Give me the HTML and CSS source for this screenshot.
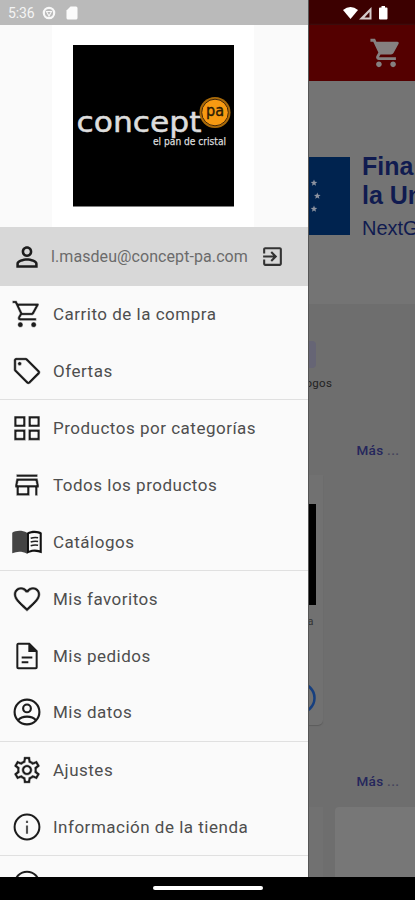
FILE: index.html
```html
<!DOCTYPE html>
<html lang="es">
<head>
<meta charset="utf-8">
<title>Concept PA</title>
<link rel="stylesheet" href="styles.css">
</head>
<body>
<div class="screen">
  <div class="content">
    <aside class="drawer">
      <div class="status">
        <span class="clock">5:36</span>
        <svg class="st-ring" viewBox="0 0 14 14"><circle cx="7" cy="7" r="5.2" fill="none" stroke="#fff" stroke-width="2.2"/><path d="M4.500 5.500h5L7 10z" fill="none" stroke="#fff" stroke-width="1.100"/></svg>
        <svg class="st-card" viewBox="0 0 12 14"><path d="M4.500.5H10a1.500 1.500 0 0 1 1.500 1.500v10a1.500 1.500 0 0 1-1.500 1.500H2A1.500 1.500 0 0 1 .5 12V4.500z" fill="#fff"/></svg>
      </div>
      <div class="brand">
        <svg class="logo" viewBox="0 0 202 202">
          <rect width="202" height="202" fill="#fff"/>
          <rect x="21" y="20" width="161" height="161.500" fill="#000"/>
          <text class="word" x="24.500" y="107" textLength="125" lengthAdjust="spacingAndGlyphs">concept</text>
          <circle cx="163" cy="87.500" r="15.500" fill="#a96a09"/>
          <circle cx="163" cy="87.500" r="13.300" fill="#f79a12" stroke="#42270a" stroke-width="1"/>
          <text class="pa" x="154" y="91" textLength="18" lengthAdjust="spacingAndGlyphs">pa</text>
          <text class="tag" x="101" y="119.500" textLength="73" lengthAdjust="spacingAndGlyphs">el pan de cristal</text>
        </svg>
      </div>
      <div class="account">
        <svg class="icon" viewBox="0 0 24 24"><path d="M12 5.900c1.160 0 2.100.94 2.100 2.100s-.94 2.100-2.100 2.100S9.900 9.160 9.900 8s.94-2.100 2.100-2.100m0 9c2.970 0 6.100 1.460 6.100 2.100v1.100H5.900V17c0-.64 3.130-2.100 6.100-2.100M12 4C9.790 4 8 5.790 8 8s1.790 4 4 4 4-1.790 4-4-1.790-4-4-4zm0 9c-2.670 0-8 1.340-8 4v3h16v-3c0-2.660-5.330-4-8-4z"/></svg>
        <span class="mail">l.masdeu@concept-pa.com</span>
        <svg class="exit" viewBox="0 0 24 24"><path d="M10.090 15.590L11.500 17l5-5-5-5-1.410 1.410L12.670 11H3v2h9.670l-2.580 2.590zM19 3H5c-1.110 0-2 .9-2 2v4h2V5h14v14H5v-4H3v4c0 1.100.89 2 2 2h14c1.100 0 2-.9 2-2V5c0-1.100-.9-2-2-2z"/></svg>
      </div>
      <nav class="menu">
        <ul class="group">
          <li class="item"><svg class="icon thin" viewBox="0 0 24 24"><path d="M15.550 13c.75 0 1.410-.41 1.750-1.030l3.580-6.490c.37-.66-.11-1.480-.87-1.480H5.210l-.94-2H1v2h2l3.600 7.590-1.350 2.440C4.520 15.370 5.480 17 7 17h12v-2H7l1.100-2h7.450zM6.160 6h12.150l-2.760 5H8.530L6.160 6zM7 18c-1.100 0-1.990.9-1.990 2S5.900 22 7 22s2-.9 2-2-.9-2-2-2zm10 0c-1.100 0-1.990.9-1.990 2s.89 2 1.990 2 2-.9 2-2-.9-2-2-2z"/></svg><span>Carrito de la compra</span></li>
          <li class="item"><svg class="icon thin" viewBox="0 0 24 24"><path d="M21.410 11.580l-9-9C12.050 2.220 11.550 2 11 2H4c-1.100 0-2 .9-2 2v7c0 .55.22 1.050.59 1.420l9 9c.36.36.86.58 1.410.58s1.050-.22 1.410-.59l7-7c.37-.36.59-.86.59-1.410s-.23-1.060-.59-1.420zM13 20.010L4 11V4h7v-.01l9 9-7 7.020z"/><circle cx="6.500" cy="6.500" r="1.500"/></svg><span>Ofertas</span></li>
        </ul>
        <ul class="group">
          <li class="item"><svg class="icon thin" viewBox="0 0 24 24"><path fill-rule="evenodd" d="M2.300 3H11v8.300H2.300zm2 2v4.300H9V5zM13 3h8.700v8.300H13zm2 2v4.300h4.700V5zM2.300 13H11v8.300H2.300zm2 2v4.300H9V15zM13 13h8.700v8.300H13zm2 2v4.300h4.700V15z"/></svg><span>Productos por categorías</span></li>
          <li class="item"><svg class="icon thin" viewBox="0 0 24 24"><path d="M18.360 9l.6 3H5.040l.6-3h12.720M20 4H4v2h16V4zm0 3H4l-1 5v2h1v6h10v-6h4v6h2v-6h1v-2l-1-5zM6 18v-4h6v4H6z"/></svg><span>Todos los productos</span></li>
          <li class="item"><svg class="icon" viewBox="0 0 26 24"><path fill="#444" d="M1 4.500C4 2.500 9 2.300 13 4.500v17c-4-2.100-8-2-12-.4z"/><path fill="#111" fill-rule="evenodd" d="M13 4.500c4-2.200 9-2 12 0v16.600c-4-1.600-8-1.700-12 .4zm1.600 1v13.600c2.800-1.200 6-1.200 8.700-.3V5.500c-2.700-1.200-6-1.200-8.700 0z"/><path fill="none" stroke="#222" stroke-width="1.200" d="M16 9q3-1 6-.4M16 12q3-1 6-.4M16 15q3-1 6-.4"/></svg><span>Catálogos</span></li>
        </ul>
        <ul class="group">
          <li class="item"><svg class="icon thin" viewBox="0 0 24 24"><path d="M16.500 3c-1.740 0-3.410.81-4.500 2.090C10.910 3.810 9.240 3 7.500 3 4.420 3 2 5.420 2 8.500c0 3.780 3.400 6.860 8.550 11.540L12 21.350l1.450-1.320C18.600 15.360 22 12.280 22 8.500 22 5.420 19.580 3 16.500 3zm-4.400 15.550l-.1.100-.1-.1C7.140 14.240 4 11.390 4 8.500 4 6.500 5.500 5 7.500 5c1.540 0 3.040.99 3.570 2.360h1.870C13.460 5.990 14.960 5 16.500 5c2 0 3.500 1.500 3.500 3.500 0 2.890-3.140 5.740-7.900 10.050z"/></svg><span>Mis favoritos</span></li>
          <li class="item"><svg class="icon" viewBox="0 0 24 24"><path d="M8 17.500h5v-1.500H8zM8 13.900h8v-1.500H8z"/><path fill-rule="evenodd" d="M14 2H5.500c-1 0-1.500.9-1.500 1.700v16.600c0 1 .6 1.700 1.500 1.700h13c1 0 1.500-.7 1.500-1.700V8l-6-6zM5.500 20.500v-17H13V9h5.500v11.500z"/></svg><span>Mis pedidos</span></li>
          <li class="item"><svg class="icon" viewBox="0 0 24 24"><g fill="none" stroke="#1c1c1c" stroke-width="1.600"><circle cx="12" cy="12" r="9.300"/><circle cx="12" cy="9.300" r="2.900"/><path d="M5.300 18.200c3-3.600 10.400-3.600 13.400 0"/></g></svg><span>Mis datos</span></li>
        </ul>
        <ul class="group">
          <li class="item"><svg class="icon thin" viewBox="0 0 24 24"><path d="M19.430 12.980c.04-.32.07-.64.07-.98 0-.34-.03-.66-.07-.98l2.110-1.650c.19-.15.24-.42.12-.64l-2-3.460c-.09-.16-.26-.25-.44-.25-.06 0-.12.01-.17.03l-2.490 1c-.52-.4-1.080-.73-1.690-.98l-.38-2.650C14.460 2.180 14.250 2 14 2h-4c-.25 0-.46.18-.49.42l-.38 2.650c-.61.25-1.170.59-1.690.98l-2.490-1c-.06-.02-.12-.03-.18-.03-.17 0-.34.09-.43.25l-2 3.460c-.13.22-.07.49.12.64l2.110 1.650c-.04.32-.07.65-.07.98 0 .33.03.66.07.98l-2.110 1.650c-.19.15-.24.42-.12.64l2 3.460c.09.16.26.25.44.25.06 0 .12-.01.17-.03l2.490-1c.52.4 1.080.73 1.690.98l.38 2.650c.03.24.24.42.49.42h4c.25 0 .46-.18.49-.42l.38-2.650c.61-.25 1.170-.59 1.690-.98l2.490 1c.06.02.12.03.18.03.17 0 .34-.09.43-.25l2-3.460c.12-.22.07-.49-.12-.64l-2.110-1.650zm-1.980-1.710c.04.31.05.52.05.73 0 .21-.02.43-.05.73l-.14 1.130.89.7 1.080.84-.7 1.210-1.270-.51-1.040-.42-.9.680c-.43.32-.84.56-1.250.73l-1.060.43-.16 1.130-.2 1.350h-1.400l-.19-1.350-.16-1.130-1.060-.43c-.43-.18-.83-.41-1.230-.71l-.91-.7-1.060.43-1.270.51-.7-1.210 1.080-.84.89-.7-.14-1.130c-.03-.31-.05-.54-.05-.74s.02-.43.05-.73l.14-1.130-.89-.7-1.080-.84.7-1.210 1.270.51 1.040.42.9-.68c.43-.32.84-.56 1.250-.73l1.060-.43.16-1.130.2-1.350h1.390l.19 1.350.16 1.130 1.060.43c.43.18.83.41 1.230.71l.91.7 1.060-.43 1.270-.51.7 1.210-1.070.85-.89.7.14 1.130zM12 8c-2.210 0-4 1.790-4 4s1.790 4 4 4 4-1.790 4-4-1.790-4-4-4zm0 6c-1.100 0-2-.9-2-2s.9-2 2-2 2 .9 2 2-.9 2-2 2z"/></svg><span>Ajustes</span></li>
          <li class="item"><svg class="icon" viewBox="0 0 24 24"><circle cx="12" cy="12" r="9.300" fill="none" stroke="#1c1c1c" stroke-width="1.500"/><path fill="#555" d="M11.200 10.800h1.600V17h-1.600zM11.200 7.400h1.600V9h-1.600z"/></svg><span>Información de la tienda</span></li>
        </ul>
        <ul class="group">
          <li class="item"><svg class="icon" viewBox="0 0 24 24"><circle cx="12" cy="12" r="9.200" fill="none" stroke="#1c1c1c" stroke-width="1.500"/></svg></li>
        </ul>
      </nav>
    </aside>
    <main class="page">
      <div class="page-status">
        <svg viewBox="0 0 46 15" width="46" height="15"><path d="M0 4Q7.500-2 15 4L7.500 13z" fill="#fff"/><path d="M28.500 1v12.500H16z" fill="#d5caca"/><path d="M26.500 6v5.500h-5z" fill="#3c0000"/><path d="M37 1.500h1.500V0h3.500v1.500h1.500a1 1 0 0 1 1 1V12.500a1 1 0 0 1-1 1H37a1 1 0 0 1-1-1V2.500a1 1 0 0 1 1-1z" fill="#fff"/></svg>
      </div>
      <div class="appbar">
        <svg viewBox="0 0 24 24" width="34" height="34"><path fill="#858080" d="M7 18c-1.100 0-1.990.9-1.990 2S5.900 22 7 22s2-.9 2-2-.9-2-2-2zM1 2v2h2l3.600 7.590-1.350 2.450c-.16.28-.25.61-.25.96 0 1.100.9 2 2 2h12v-2H7.420c-.14 0-.25-.11-.25-.25l.03-.12.900-1.630h7.450c.75 0 1.410-.41 1.750-1.030l3.580-6.490A1.003 1.003 0 0 0 20 4H5.210l-.94-2H1zm16 16c-1.100 0-1.990.9-1.990 2s.89 2 1.990 2 2-.9 2-2-.9-2-2-2z"/></svg>
      </div>
      <section class="banner">
        <svg class="flag" viewBox="1 0 41 78"><rect width="42" height="78" fill="#00234f"/><g fill="#8d93a0"><path id="s" d="M6 22.500l.9 2.300 2.400.1-1.900 1.500.7 2.400L6 27.400l-2.100 1.400.7-2.400-1.900-1.500 2.400-.1z"/><use href="#s" x="3.300" y="13"/><use href="#s" y="26"/></g></svg>
        <div class="fund"><b>Finan</b><b>la Un</b><span>NextG</span></div>
      </section>
      <section class="cats"><div class="chip"></div><div class="chip-label">ogos</div></section>
      <div class="more">Más <i>...</i></div>
      <section class="product">
        <div class="photo"></div>
        <div class="pname">a</div>
        <svg class="ring" viewBox="1 0 7 34"><circle cx="-8" cy="17" r="14.500" fill="none" stroke="#163f7f" stroke-width="2.500"/></svg>
      </section>
      <div class="more second">Más <i>...</i></div>
      <section class="cards"><div class="card edge"></div><div class="card"></div></section>
    </main>
  </div>
  <footer class="navbar"><div class="handle"></div></footer>
</div>
</body>
</html>
```
FILE: styles.css
```css
* { box-sizing: border-box; }
body { margin: 0; font-family: Roboto, "Liberation Sans", sans-serif; }
ul { margin: 0; padding: 0; list-style: none; }
svg { display: block; flex: none; }
.screen { width: 415px; height: 900px; overflow: hidden; display: flex; flex-direction: column; background: #000; }
.content { height: 877px; display: flex; overflow: hidden; flex: none; }
.drawer { width: 307.500px; height: 877px; flex: none; background: #fafafa; overflow: hidden; }
.status { height: 25px; background: #bababa; display: flex; align-items: center; padding-left: 8px; color: #f4f4f4; }
.clock { font-size: 14px; width: 34px; line-height: 25px; padding-top: 2px; letter-spacing: -.1px; }
.st-ring { width: 14px; height: 14px; opacity: .9; }
.st-card { width: 12px; height: 14px; margin-left: 10px; opacity: .95; }
.brand { height: 202px; padding-left: 52px; }
.logo { width: 202px; height: 202px; }
.word { font: 28px "DejaVu Sans", sans-serif; fill: #ddd; stroke: #ddd; stroke-width: .5px; }
.pa { font: 16px "DejaVu Sans", sans-serif; fill: #2a1a05; stroke: #2a1a05; stroke-width: .4px; }
.tag { font: 10.5px "DejaVu Sans", sans-serif; fill: #ddd; stroke: #ddd; stroke-width: .25px; }
.account { height: 59px; background: #d8d8d8; display: flex; align-items: center; padding-left: 11px; color: #6b6b6b; }
.icon { width: 32px; height: 32px; fill: #1c1c1c; }
.thin { stroke: #fafafa; stroke-width: .4px; }
.exit { width: 25px; height: 25px; fill: #333; }
.mail { font-size: 16px; width: 202px; margin: 0 7px 0 8px; letter-spacing: .08px; white-space: nowrap; }
.item { height: 56.6px; display: flex; align-items: center; gap: 10px; padding-left: 11px; font-size: 17px; letter-spacing: .5px; color: #4e4e4e; white-space: nowrap; }
.group + .group { border-top: 1px solid #e0e0e0; }
.page { flex: 1; min-width: 0; height: 877px; overflow: hidden; background: #6e6e6e; border-left: 1px solid #555; }
.page-status { height: 25px; background: #3c0000; padding: 6px 0 0 34.500px; }
.appbar { height: 56px; background: #540000; padding: 11px 0 0 60px; box-shadow: 0 1px 3px #444; }
.banner { height: 223px; background: #747474; display: flex; align-items: flex-start; padding-top: 76px; overflow: hidden; }
.flag { width: 41px; height: 78px; }
.fund { margin: -5px 0 0 12.500px; display: flex; flex-direction: column; font-family: "Liberation Sans", sans-serif; color: #101b50; font-size: 25px; line-height: 29px; white-space: nowrap; }
.fund span { font-size: 20px; line-height: 29px; margin-top: 4px; }
.cats { height: 137px; padding-top: 37px; }
.chip { width: 7px; height: 27px; background: #666575; border-radius: 0 4px 4px 0; }
.chip-label { font-size: 11.500px; line-height: 14px; margin: 8px 0 0 -3px; color: #222; letter-spacing: .3px; }
.more { height: 34px; padding-left: 48px; font-size: 13.500px; line-height: 18px; font-weight: 500; color: #25265c; letter-spacing: .3px; }
.more i { font-style: normal; color: #44445c; }
.product { width: 14px; height: 250px; background: #717171; border-radius: 0 0 5px 0; box-shadow: 0 1px 1px #5b5b5b; padding-top: 29px; }
.photo { width: 7px; height: 101px; background: #000; }
.pname { font-size: 11px; line-height: 14px; margin: 10px 0 0 -1px; color: #333; }
.ring { width: 7px; height: 34px; margin-top: 52px; }
.second { height: 35px; margin-top: 47px; }
.cards { display: flex; gap: 12px; }
.card { flex: 1; height: 72px; background: #777; border-radius: 4px 0 0 0; }
.edge { flex: none; width: 14px; background: #717171; border-radius: 0; }
.navbar { height: 23px; background: #000; display: flex; justify-content: center; padding-top: 9px; }
.handle { width: 110px; height: 4px; border-radius: 2px; background: #fff; }
```
